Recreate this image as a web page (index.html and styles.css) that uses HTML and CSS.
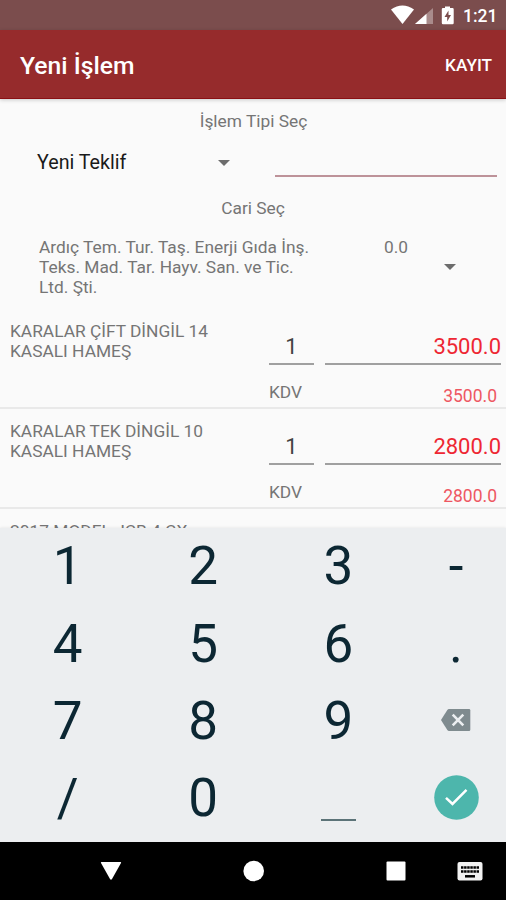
FILE: index.html
```html
<!DOCTYPE html>
<html lang="tr">
<head>
<meta charset="utf-8">
<title>Yeni İşlem</title>
<link rel="stylesheet" href="styles.css">
</head>
<body>
<div class="screen">
  <div class="status">
    <svg class="status-icons" width="66" height="22" viewBox="0 0 66 22">
      <path d="M0 4.500Q11.500-3.500 23 4.500L11.500 19Z" fill="#fff"/>
      <path d="M42 3V19H24Z" fill="#fff" opacity=".35"/>
      <path d="M35.500 8.700V19H24Z" fill="#fff"/>
      <path d="M54 3V1.500H59V3H61.500Q62.700 3 62.700 4.200V18Q62.700 19.200 61.500 19.200H52Q50.800 19.200 50.800 18V4.200Q50.800 3 52 3Z" fill="#fff"/>
      <path d="M57.500 5.500L53.500 12H56.200V16.500L60 10H57.500Z" fill="#7b4d4d"/>
    </svg>
    <span class="clock">1:21</span>
  </div>
  <header class="appbar">
    <h1 class="title">Yeni İşlem</h1>
    <span class="save">KAYIT</span>
  </header>
  <main class="content">
    <div class="label type-label">İşlem Tipi Seç</div>
    <div class="type-row">
      <div class="type-select"><span>Yeni Teklif</span><i class="caret"></i></div>
      <div class="type-input"></div>
    </div>
    <div class="label account-label">Cari Seç</div>
    <div class="account-row">
      <div class="account-name">Ardıç Tem. Tur. Taş. Enerji Gıda İnş.<br>Teks. Mad. Tar. Hayv. San. ve Tic.<br>Ltd. Şti.</div>
      <div class="account-balance">0.0</div>
      <i class="caret"></i>
    </div>
    <section class="item">
      <div class="item-name">KARALAR ÇİFT DİNGİL 14<br>KASALI HAMEŞ</div>
      <div class="qty">1</div>
      <div class="price">3500.0</div>
      <div class="tax">KDV</div>
      <div class="total">3500.0</div>
    </section>
    <section class="item">
      <div class="item-name">KARALAR TEK DİNGİL 10<br>KASALI HAMEŞ</div>
      <div class="qty">1</div>
      <div class="price">2800.0</div>
      <div class="tax">KDV</div>
      <div class="total">2800.0</div>
    </section>
    <section class="item">
      <div class="item-name">2017 MODEL JCB 4 CX</div>
    </section>
  </main>
  <div class="keyboard">
    <span>1</span><span>2</span><span>3</span><span>-</span>
    <span>4</span><span>5</span><span>6</span><span>.</span>
    <span>7</span><span>8</span><span>9</span>
    <span class="icon-key"><svg width="30" height="22" viewBox="0 0 30 22">
      <path d="M8 0H28Q29.300 0 29.300 1.300V20.700Q29.300 22 28 22H8Q7 22 6.300 21L0 11L6.300 1Q7 0 8 0Z" fill="#7f8b8f"/>
      <path d="M11.700 5.700L22.300 16.300M22.300 5.700L11.700 16.300" stroke="#eceff1" stroke-width="2.600"/>
    </svg></span>
    <span>/</span><span>0</span><span class="space-key"><i class="space-bar"></i></span>
    <span class="icon-key"><svg width="45" height="45" viewBox="0 0 45 45">
      <circle cx="22.500" cy="22.500" r="22.300" fill="#4db6ac"/>
      <path d="M12 22.800L18.500 29L32.500 14.800" fill="none" stroke="#fff" stroke-width="2.500"/>
    </svg></span>
  </div>
  <nav class="navbar">
    <svg width="506" height="58" viewBox="0 0 506 58">
      <path d="M101.500 20H120.500Q121.500 20 121 21L112 37Q111 38.500 110 37L101 21Q100.500 20 101.500 20Z" fill="#fff"/>
      <circle cx="253.700" cy="29" r="10.300" fill="#fff"/>
      <rect x="386.500" y="19.500" width="19" height="19" rx="1" fill="#fff"/>
      <rect x="457.500" y="20" width="25" height="18.500" rx="2" fill="#f2f2f2"/>
      <path d="M461 25.500H479M461 29.500H479" stroke="#000" stroke-width="2.500" stroke-dasharray="2.500 .6"/>
      <path d="M465 34.300H475" stroke="#000" stroke-width="2.500"/>
    </svg>
  </nav>
</div>
</body>
</html>
```

FILE: styles.css
```css
* { box-sizing: border-box; }
body { margin: 0; font-family: Roboto, "Liberation Sans", sans-serif; }
.screen {
  width: 506px;
  height: 900px;
  display: flex;
  flex-direction: column;
  overflow: hidden;
  background: #fafafa;
}
.status {
  height: 30px;
  flex: none;
  display: flex;
  justify-content: flex-end;
  align-items: center;
  padding: 2px 9px 0 0;
  background: #7b4d4d;
  color: #fff;
}
.status-icons { margin: 0 6px 0 0; }
.clock { font-size: 17.500px; font-weight: 500; width: 34px; }
.appbar {
  height: 69px;
  flex: none;
  display: flex;
  align-items: center;
  justify-content: space-between;
  padding: 1px 14px 0 20px;
  background: #962b2c;
  border-bottom: 1px solid #8a1014;
  box-shadow: 0 1px 4px rgba(0, 0, 0, .2);
  color: #fff;
  z-index: 1;
}
.title { margin: 0; padding-top: 1px; font-size: 24.700px; font-weight: 500; }
.save { font-size: 17.200px; font-weight: 500; }
.content {
  height: 429px;
  flex: none;
  overflow: hidden;
  font-size: 17.330px;
  line-height: 20px;
  color: #757575;
}
.label { text-align: center; }
.type-label { padding: 12px 0 0 1px; }
.type-row { display: flex; height: 67px; padding-top: 11px; }
.type-select {
  width: 275px;
  height: 42px;
  display: flex;
  align-items: center;
  justify-content: space-between;
  padding: 0 45px 0 37px;
  font-size: 19.700px;
  color: #1a1a1a;
}
.caret {
  width: 12px;
  height: 6px;
  background: #6c6c6c;
  clip-path: polygon(0 0, 100% 0, 50% 100%);
}
.type-input { width: 222px; height: 35px; border-bottom: 2px solid #bd9299; }
.account-row { display: flex; height: 91px; padding: 19px 0 0 39px; }
.account-name { width: 345px; white-space: nowrap; }
.account-balance { width: 60px; }
.account-row .caret { margin-top: 27px; }
.item {
  height: 100px;
  display: grid;
  grid-template-columns: 259px 45px 11px 176px;
  grid-template-rows: 44px 34px;
  padding: 12px 5px 0 10px;
  border-bottom: 2px solid #e9e9e9;
}
.qty, .price {
  height: 44px;
  padding-top: 16px;
  border-bottom: 2px solid #a0a0a0;
  font-size: 22px;
}
.qty { grid-column: 2; text-align: center; color: #424242; }
.price { grid-column: 4; text-align: right; color: #ee2733; }
.tax { grid-column: 2; padding-top: 17px; white-space: nowrap; }
.total { grid-column: 4; padding: 21px 4px 0 0; text-align: right; color: #ee5762; font-size: 17.500px; }
.keyboard {
  height: 314px;
  flex: none;
  display: grid;
  grid-template-columns: 135.500px 135.500px 135px 100px;
  grid-template-rows: repeat(4, 77.400px);
  background: #eceef0;
  box-shadow: 0 0 3px rgba(0, 0, 0, .1);
  font-size: 53px;
  line-height: 77px;
  color: #0c2733;
}
.keyboard span { display: flex; justify-content: center; align-items: center; }
.keyboard .icon-key { padding-bottom: 2px; }
.keyboard .space-key { align-items: flex-end; }
.space-bar { width: 35px; height: 2px; margin-bottom: 17px; background: #5c7378; }
.navbar { height: 58px; flex: none; background: #000; }
.navbar svg { display: block; }
```
